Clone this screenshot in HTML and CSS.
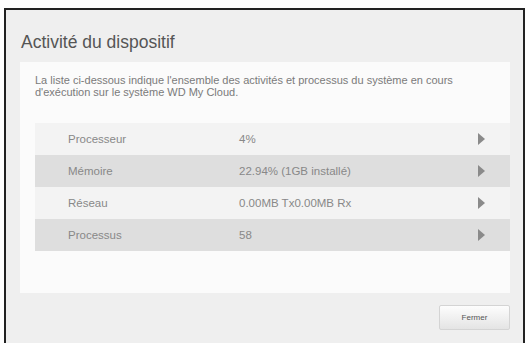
FILE: index.html
```html
<!DOCTYPE html>
<html lang="fr">

<head>
    <meta charset="UTF-8">
    <meta name="viewport" content="width=device-width, initial-scale=1.0">
    <title>Activité du dispositif</title>
    <link rel="stylesheet" href="styles.css">
</head>

<body>

<div class="dialog">
    <h1 class="dialog-title">Activité du dispositif</h1>

    <div class="panel">
        <p class="description">La liste ci-dessous indique l'ensemble des activités et processus du système en cours<br>d'exécution sur le système WD My Cloud.</p>

        <!-- Liste der Aktivitäten -->
        <div class="activity-list">
            <div class="activity-row">
                <span class="activity-label">Processeur</span>
                <span class="activity-value">4%</span>
                <span class="arrow"></span>
            </div>
            <div class="activity-row dark">
                <span class="activity-label">Mémoire</span>
                <span class="activity-value">22.94% (1GB installé)</span>
                <span class="arrow"></span>
            </div>
            <div class="activity-row">
                <span class="activity-label">Réseau</span>
                <span class="activity-value">0.00MB Tx0.00MB Rx</span>
                <span class="arrow"></span>
            </div>
            <div class="activity-row dark">
                <span class="activity-label">Processus</span>
                <span class="activity-value">58</span>
                <span class="arrow"></span>
            </div>
        </div>
    </div>

    <div class="dialog-footer">
        <button class="button">Fermer</button>
    </div>
</div>

</body>

</html>
```

FILE: styles.css
```css
body {
    font-family: "Liberation Sans", Arial, sans-serif;
    margin: 0;
    padding: 0;
    background-color: #fff;
    color: #777;
    overflow: hidden;
}

.dialog {
    margin: 8px 0 0 4px;
    width: 517px;
    height: 345px;
    border: 2px solid #222;
    border-bottom: none;
    background-color: #efefef;
}

.dialog-title {
    margin: 0;
    padding: 22px 0 0 15px;
    height: 30px;
    font-size: 17.5px;
    font-weight: normal;
    color: #555;
}

.panel {
    margin-left: 14px;
    width: 490px;
    height: 231px;
    background-color: #fbfbfb;
}

.description {
    margin: 0;
    padding: 12px 0 0 15px;
    height: 49px;
    font-size: 11px;
    line-height: 12px;
    color: #7a7a7a;
}

.activity-list {
    margin-left: 15px;
}

.activity-row {
    display: flex;
    align-items: center;
    height: 32px;
    background-color: #f3f3f3;
    font-size: 11.5px;
    color: #888;
}

.activity-row.dark {
    background-color: #dedede;
}

.activity-label {
    width: 171px;
    padding-left: 33px;
}

.activity-value {
    flex: 1;
}

.arrow {
    width: 0;
    height: 0;
    margin-right: 25px;
    border-top: 6px solid transparent;
    border-bottom: 6px solid transparent;
    border-left: 7px solid #8a8a8a;
}

.dialog-footer {
    display: flex;
    justify-content: flex-end;
    padding: 12px 13px 0 0;
}

.button {
    width: 71px;
    height: 25px;
    border: 1px solid #d4d4d4;
    border-radius: 2px;
    background: linear-gradient(#fdfdfd, #e4e4e4);
    font-family: "Liberation Sans", Arial, sans-serif;
    font-size: 8px;
    color: #555;
}
```
